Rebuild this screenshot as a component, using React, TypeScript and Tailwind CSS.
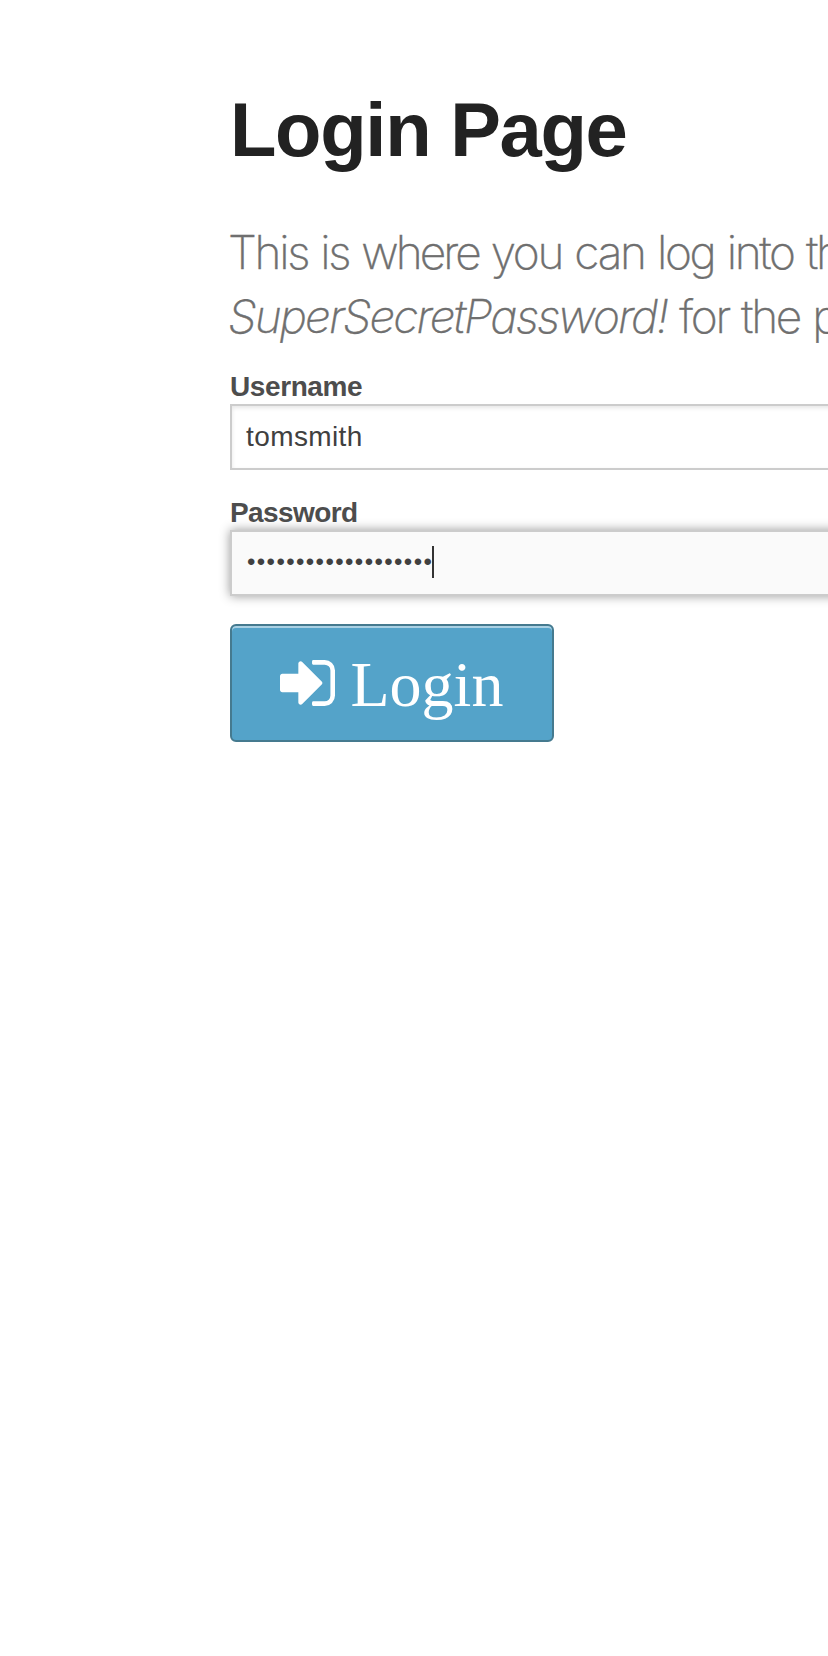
function SignInIcon() {
  return (
    <svg className="h-[46px] w-[55px] shrink-0" viewBox="0 256 1536 1280" fill="currentColor" aria-hidden="true">
      <path d="M1184 896q0 26-19 45l-544 544q-19 19-45 19t-45-19-19-45v-288h-448q-26 0-45-19t-19-45v-384q0-26 19-45t45-19h448v-288q0-26 19-45t45-19 45 19l544 544q19 19 19 45zm352-352v704q0 119-84.5 203.5t-203.5 84.5h-320q-13 0-22.5-9.5t-9.5-22.5q0-4-1-20t-.5-26.5 3-23.5 10-19.5 20.5-6.5h320q66 0 113-47t47-113v-704q0-66-47-113t-113-47h-312l-11.5-1-11.5-3-8-5.5-7-9-2-13.5q0-4-1-20t-.5-26.5 3-23.5 10-19.5 20.5-6.5h320q119 0 203.5 84.5t84.5 203.5z" />
    </svg>
  );
}

export default function App() {
  return (
    <main className="h-[1656px] w-full overflow-hidden bg-white pt-[78px] pl-[230px] font-['Liberation_Sans',Arial,sans-serif] text-[#4d4d4d]">
      <h1 className="h-[142px] text-[76px] leading-[104px] font-bold tracking-[-1.3px] whitespace-nowrap text-[#222222]">
        Login Page
      </h1>
      <div className="-ml-[2px] h-[148px] font-['Inter',sans-serif] text-[46px] leading-[64px] font-extralight tracking-[-2.3px] whitespace-nowrap text-[#6f6f6f] [-webkit-text-stroke:0.4px_#6f6f6f] [word-spacing:1.5px]">
        <p>
          This is <span className="tracking-[-3px]">where</span> you can log into the
        </p>
        <p>
          <em className="tracking-[-1.9px]">SuperSecretPassword!</em> for the password.
        </p>
      </div>
      <form className="w-[800px]">
        <label className="block h-[36px] text-[28px] leading-[37px] font-bold tracking-[-0.4px]">Username</label>
        <div className="flex h-[66px] items-center border-2 border-[#cccccc] bg-white pl-[14px] text-[28px] tracking-[0.4px] text-[#404040] shadow-[inset_0_2px_4px_rgba(0,0,0,0.1)]">
          tomsmith
        </div>
        <label className="mt-[24px] block h-[36px] text-[28px] leading-[37px] font-bold tracking-[-0.6px]">Password</label>
        <div className="flex h-[66px] items-center border-2 border-[#cccccc] bg-[#fafafa] pb-[2px] pl-[15px] text-[#404040] shadow-[0_0_10px_#999999]">
          <span className="w-[185px] text-[24px] tracking-[1.4px] whitespace-nowrap">•••••••••••••••••••</span>
          <span className="h-[32px] w-[2px] bg-[#333333]" />
        </div>
        <button
          type="button"
          className="mt-[28px] flex h-[118px] w-[324px] items-center rounded-[6px] border-2 border-[#457a8f] bg-[#54a3c9] pl-[48px] font-['Liberation_Serif',serif] text-[64px] leading-none text-white shadow-[inset_0_2px_0_rgba(255,255,255,0.5)]"
        >
          <SignInIcon />
          <span className="ml-[15.5px] pt-[3px]">Login</span>
        </button>
      </form>
    </main>
  );
}
